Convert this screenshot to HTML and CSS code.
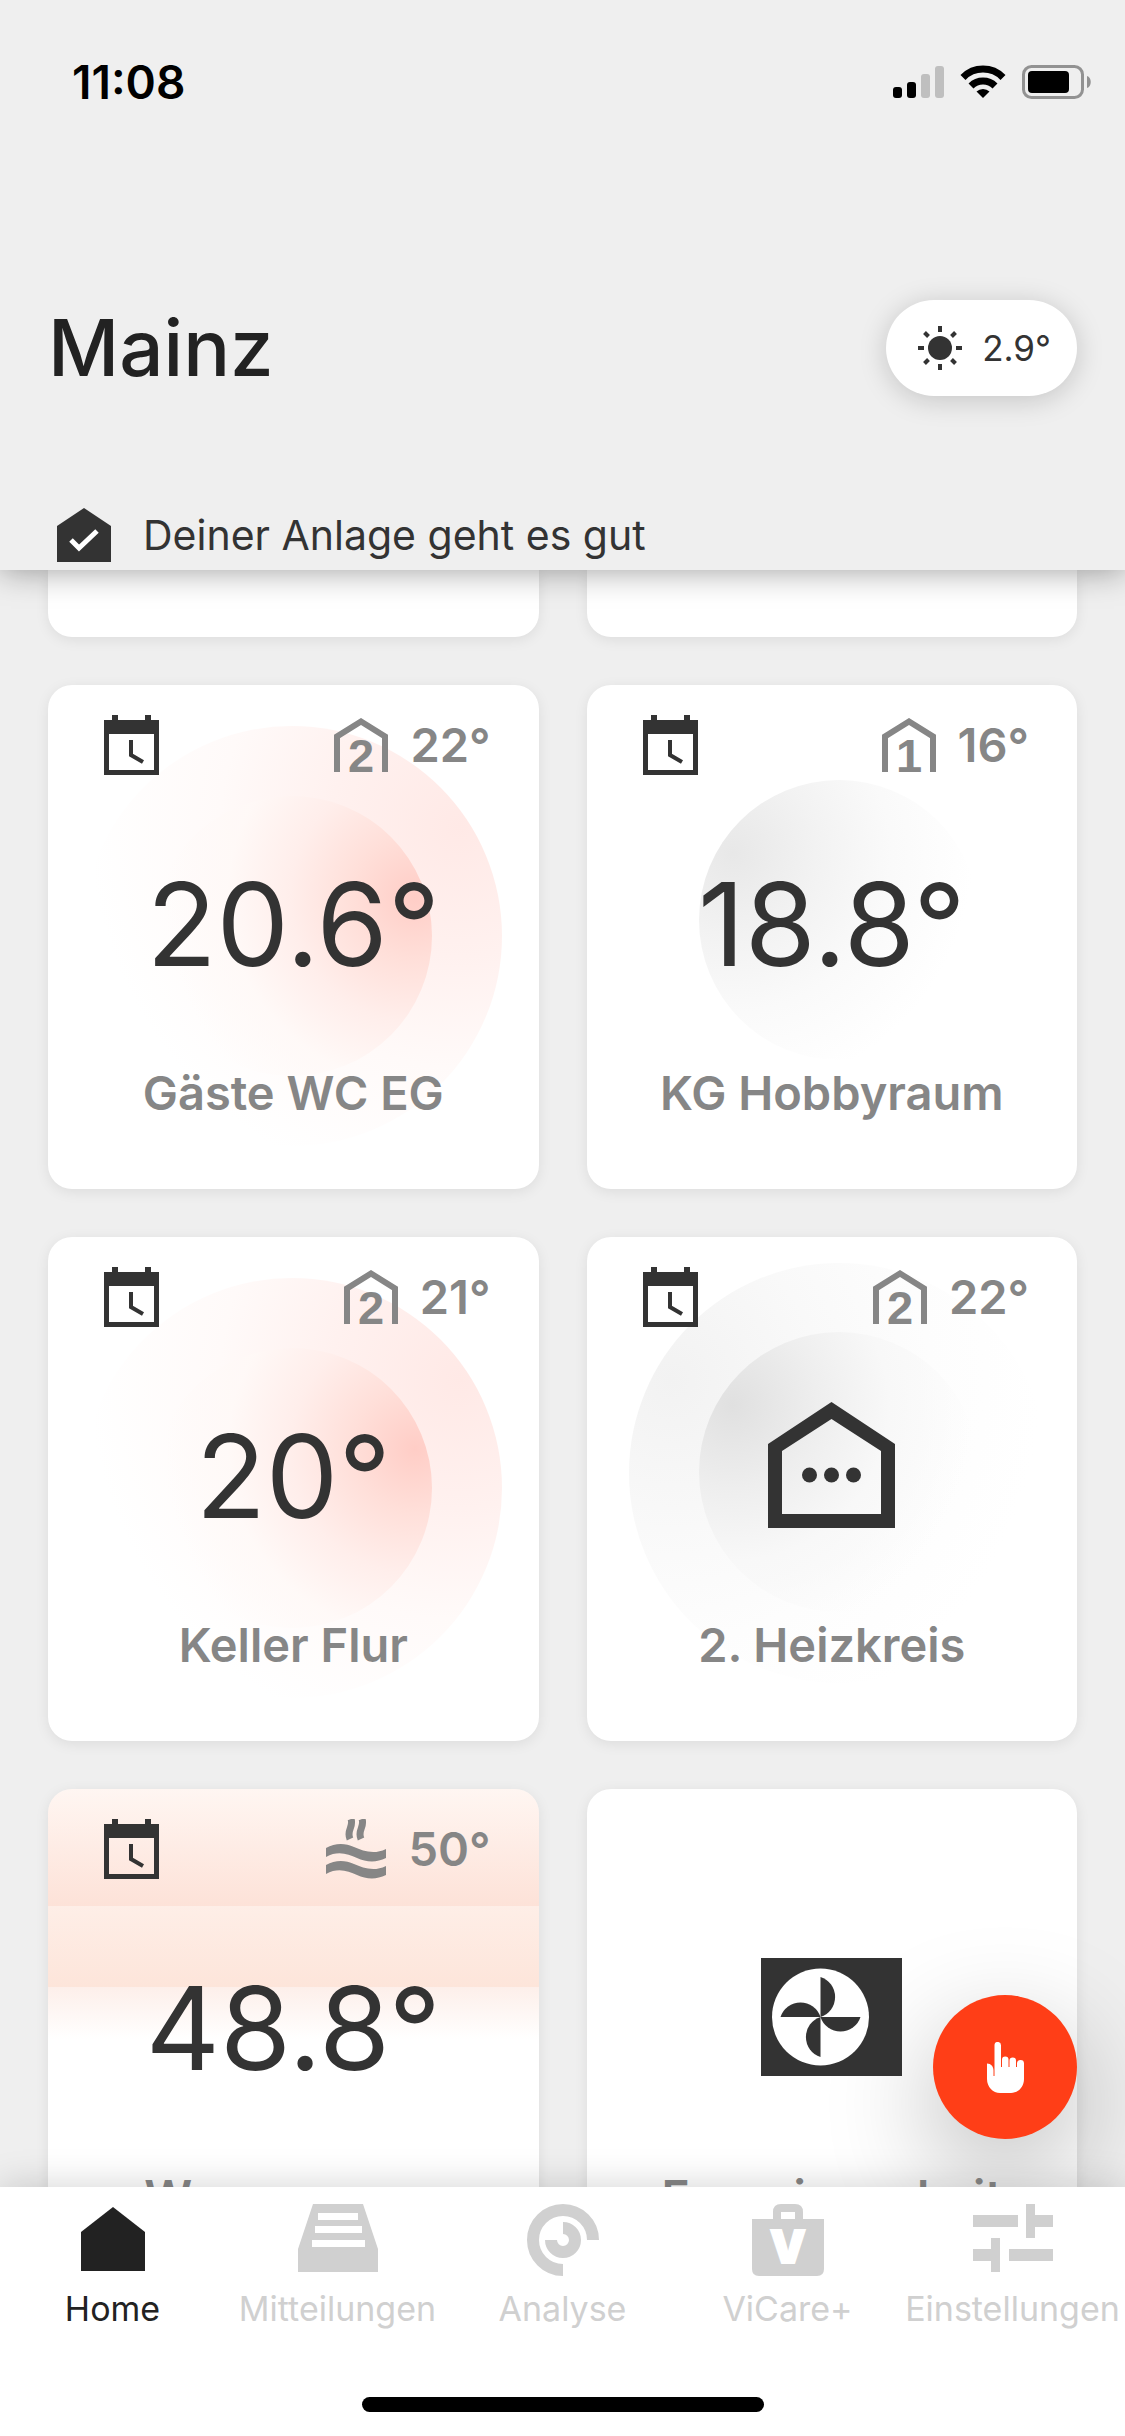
FILE: index.html
```html
<!DOCTYPE html>
<html lang="de">
<head>
<meta charset="utf-8">
<meta name="viewport" content="width=device-width, initial-scale=1">
<title>Mainz</title>
<link rel="stylesheet" href="styles.css">
</head>
<body>
<svg class="sprite" aria-hidden="true">
  <symbol id="calendar" viewBox="0 0 55 60">
    <path fill="currentColor" fill-rule="evenodd" d="M8 0h6v5h27V0h6v5h8v55H0V5h8zM5 19v36h45V19z"/>
    <path fill="none" stroke="currentColor" stroke-width="4" d="M27 25v15l12 7"/>
  </symbol>
  <symbol id="level" viewBox="0 0 54 54">
    <path fill="none" stroke="currentColor" stroke-width="6" d="M3 54V18.500L27 3.500l24 15V54"/>
  </symbol>
</svg>

<header class="header">
  <div class="statusbar">
    <span class="clock">11:08</span>
    <svg class="system" width="200" height="36" viewBox="0 0 200 36" aria-hidden="true">
      <rect x="0" y="23" width="9" height="11" rx="3"/>
      <rect x="14" y="18" width="9" height="16" rx="3"/>
      <rect x="28" y="10" width="9" height="24" rx="3" fill="#bfbfbf"/>
      <rect x="42" y="2" width="9" height="32" rx="3" fill="#bfbfbf"/>
      <g fill="none" stroke="#000">
        <path stroke-width="7" d="M70 13.500a28 28 0 0 1 40 0"/>
        <path stroke-width="7" d="M78 22a17 17 0 0 1 24 0"/>
      </g>
      <path d="M83.500 27.500a9.500 9.500 0 0 1 13 0L90 34z"/>
      <rect x="130.500" y="2.500" width="59" height="31" rx="8" fill="none" stroke="#929292" stroke-width="3"/>
      <rect x="135" y="7" width="41" height="22" rx="4"/>
      <path fill="#929292" d="M194 12c5 1 5 11 0 12z"/>
    </svg>
  </div>
  <div class="titlebar">
    <h1 class="title">Mainz</h1>
    <button class="weather" type="button">
      <svg width="44" height="44" viewBox="-22 -22 44 44" aria-hidden="true">
        <circle r="12" fill="currentColor"/>
        <path stroke="currentColor" stroke-width="4" d="M0-22v6M0 16v6M-22 0h6M16 0h6M11.500-11.500l4-4M-11.500-11.500l-4-4M11.500 11.500l4 4M-11.500 11.500l-4 4"/>
      </svg>
      <span>2.9°</span>
    </button>
  </div>
  <p class="state">
    <svg width="54" height="54" viewBox="0 0 54 54" aria-hidden="true">
      <path fill="currentColor" d="M0 18L27 0l27 18v36H0z"/>
      <path fill="none" stroke="#fff" stroke-width="5" d="M14 32l8 8 18-17"/>
    </svg>
    <span>Deiner Anlage geht es gut</span>
  </p>
</header>

<main class="content">
  <div class="grid">
    <div class="tile tile-tail"></div>
    <div class="tile tile-tail"></div>

    <a class="tile warm" href="#gaeste-wc">
      <span class="tile-head">
        <svg width="55" height="60"><use href="#calendar"/></svg>
        <span class="target">
          <svg class="level" width="54" height="54"><use href="#level"/><text class="digit" x="27" y="54">2</text></svg>
          <span>22°</span>
        </span>
      </span>
      <span class="value">20.6°</span>
      <span class="name">Gäste WC EG</span>
    </a>

    <a class="tile cool cool-low" href="#hobbyraum">
      <span class="tile-head">
        <svg width="55" height="60"><use href="#calendar"/></svg>
        <span class="target">
          <svg class="level" width="54" height="54"><use href="#level"/><text class="digit" x="27" y="54">1</text></svg>
          <span>16°</span>
        </span>
      </span>
      <span class="value">18.8°</span>
      <span class="name">KG Hobbyraum</span>
    </a>

    <a class="tile warm" href="#keller-flur">
      <span class="tile-head">
        <svg width="55" height="60"><use href="#calendar"/></svg>
        <span class="target">
          <svg class="level" width="54" height="54"><use href="#level"/><text class="digit" x="27" y="54">2</text></svg>
          <span>21°</span>
        </span>
      </span>
      <span class="value">20°</span>
      <span class="name">Keller Flur</span>
    </a>

    <a class="tile cool" href="#heizkreis-2">
      <span class="tile-head">
        <svg width="55" height="60"><use href="#calendar"/></svg>
        <span class="target">
          <svg class="level" width="54" height="54"><use href="#level"/><text class="digit" x="27" y="54">2</text></svg>
          <span>22°</span>
        </span>
      </span>
      <span class="value">
        <svg width="127" height="126" viewBox="0 0 127 126">
          <path fill="currentColor" fill-rule="evenodd" d="M0 42L63.500 0 127 42v84H0zM14 49v63h99V49L63.500 17z"/>
          <g fill="currentColor"><circle cx="41.500" cy="73" r="7.500"/><circle cx="63.500" cy="73" r="7.500"/><circle cx="85.500" cy="73" r="7.500"/></g>
        </svg>
      </span>
      <span class="name">2. Heizkreis</span>
    </a>

    <a class="tile water" href="#warmwasser">
      <span class="tile-head">
        <svg width="55" height="60"><use href="#calendar"/></svg>
        <span class="target">
          <svg width="60" height="60" viewBox="0 0 60 60">
            <g fill="currentColor">
              <path id="wave" d="M0 29C9 24 19 24 28 28S48 36 60 30v9C50 44 40 43 31 39S12 31 0 38z"/>
              <use href="#wave" y="17"/>
            </g>
            <g fill="none" stroke="currentColor" stroke-width="7">
              <path d="M25 0c3 8-5 11-1 20M36 0c3 8-5 11-1 20"/>
            </g>
          </svg>
          <span>50°</span>
        </span>
      </span>
      <span class="value">48.8°</span>
      <span class="name">Warmwasser</span>
    </a>

    <a class="tile" href="#energiecockpit">
      <span class="tile-head"></span>
      <span class="value">
        <svg width="141" height="126" viewBox="0 -4 141 126">
          <path fill="currentColor" d="M0 0h141v118H0z"/>
          <circle cx="59.500" cy="59" r="48.500" fill="#fff"/>
          <g fill="currentColor">
            <path id="blade" d="M59.500 59V19a21 21 0 0 1 0 40z"/>
            <use href="#blade" transform="rotate(90 59.500 59)"/>
            <use href="#blade" transform="rotate(180 59.500 59)"/>
            <use href="#blade" transform="rotate(270 59.500 59)"/>
          </g>
        </svg>
      </span>
      <span class="name">Energiecockpit</span>
    </a>
  </div>
  <button class="fab" type="button" aria-label="Schnellaktionen">
    <svg width="37" height="51" viewBox="0 0 37 51" aria-hidden="true">
      <path fill="#fff" d="M0 21.500c4 0 6.500 3 6.500 7V34h1V3.200a3.200 3.200 0 0 1 6.500 0V25h1v-7.300a3.200 3.200 0 0 1 6.500 0V25h1v-6.300a3.200 3.200 0 0 1 6.500 0V25h1v-3.500a3.200 3.200 0 0 1 7 0V37c0 8-6 14-13 14h-11C6 51 0 45 0 37z"/>
    </svg>
  </button>
</main>

<footer class="footer">
  <nav class="tabs">
    <a class="tab active" href="#home">
      <svg width="80" height="72" viewBox="0 0 80 72" aria-hidden="true"><path fill="currentColor" d="M8 28L40 3l32 25v39H8z"/></svg>
      <span>Home</span>
    </a>
    <a class="tab" href="#mitteilungen">
      <svg width="80" height="72" viewBox="0 0 80 72" aria-hidden="true"><path fill="currentColor" fill-rule="evenodd" d="M0 68V45L15 0h50l15 45v23zM20 9v7h40V9zM17 22v7h47v-7zM14 36v7h53v-7z"/></svg>
      <span>Mitteilungen</span>
    </a>
    <a class="tab" href="#analyse">
      <svg width="80" height="72" viewBox="-4 0 80 72" aria-hidden="true"><path fill="none" stroke="currentColor" stroke-width="12" d="M66 36A30 30 0 1 0 36 66M36 24A12 12 0 1 1 24 36"/></svg>
      <span>Analyse</span>
    </a>
    <a class="tab" href="#vicare-plus">
      <svg width="80" height="72" viewBox="-4 0 80 72" aria-hidden="true">
        <path fill="currentColor" fill-rule="evenodd" d="M0 15h21V8q0-8 8-8h14q8 0 8 8v7h21v50q0 7-7 7H7q-7 0-7-7zM29 8v7h14V8z"/>
        <text class="bag-letter" x="36" y="59">V</text>
      </svg>
      <span>ViCare+</span>
    </a>
    <a class="tab" href="#einstellungen">
      <svg width="80" height="72" viewBox="0 0 80 72" aria-hidden="true"><path fill="currentColor" d="M0 11h45v12H0zM53 0h9v11h18v12H62v11h-9zM0 45h18V34h9v34h-9V57H0zM36 45h44v12H36z"/></svg>
      <span>Einstellungen</span>
    </a>
  </nav>
  <div class="home-indicator"></div>
</footer>
</body>
</html>
```

FILE: styles.css
```css
* {
  box-sizing: border-box;
}

body {
  margin: 0;
  height: 100vh;
  display: flex;
  flex-direction: column;
  overflow: hidden;
  background: #efefef;
  color: #333;
  font-family: Inter, "Liberation Sans", sans-serif;
}

a {
  color: inherit;
  text-decoration: none;
}

button {
  border: 0;
  padding: 0;
  font: inherit;
  color: inherit;
}

svg {
  display: block;
  flex: none;
}

.sprite {
  position: absolute;
  width: 0;
  height: 0;
}

/* Header */

.header {
  position: relative;
  z-index: 1;
  flex: none;
  padding: 54px 48px 8px;
  background: #efefef;
  box-shadow: 0 0 32px rgba(0, 0, 0, 0.4);
}

.statusbar {
  display: flex;
  align-items: center;
  justify-content: space-between;
  height: 56px;
  padding-left: 24px;
  margin-right: -16px;
  color: #000;
}

.clock {
  font-size: 46px;
  line-height: 56px;
  font-weight: 600;
}

.titlebar {
  display: flex;
  align-items: center;
  justify-content: space-between;
  margin-top: 190px;
}

.title {
  margin: 0;
  font-size: 78px;
  line-height: 96px;
  font-weight: 500;
  color: #222;
}

.weather {
  display: flex;
  align-items: center;
  gap: 20px;
  height: 96px;
  padding: 0 26px 0 32px;
  border-radius: 48px;
  background: #fff;
  box-shadow: 0 4px 28px rgba(0, 0, 0, 0.18);
  font-size: 35px;
}

.state {
  display: flex;
  align-items: center;
  gap: 32px;
  margin: 112px 0 0;
  padding-left: 9px;
  font-size: 41px;
  line-height: 54px;
}

/* Tiles */

.content {
  position: relative;
  flex: 1;
  min-height: 0;
  overflow: hidden;
}

.grid {
  display: grid;
  grid-template-columns: 1fr 1fr;
  gap: 48px;
  padding: 0 48px;
}

.tile {
  position: relative;
  display: flex;
  flex-direction: column;
  align-items: stretch;
  min-height: 504px;
  overflow: hidden;
  border-radius: 24px;
  background: #fff;
  box-shadow: 0 3px 14px rgba(0, 0, 0, 0.08);
}

.tile-tail {
  min-height: 67px;
  border-radius: 0 0 24px 24px;
}

/* Concentric glow discs behind the reading */

.warm::before,
.warm::after,
.cool::before,
.cool::after {
  content: "";
  position: absolute;
  border-radius: 50%;
}

.warm::before {
  left: 34px;
  top: 41px;
  width: 420px;
  height: 420px;
  background: radial-gradient(circle 370px at 90% 24%, #ffe9e6, #fff1ef 35%, #fffaf9 65%, #fff);
}

.warm::after {
  left: 104px;
  top: 111px;
  width: 280px;
  height: 280px;
  background: radial-gradient(circle 250px at 94% 36%, #ffcdc6, #ffdfd9 25%, #ffeeeb 50%, rgba(255, 249, 247, 0.8) 75%, rgba(255, 255, 255, 0));
}

.cool::before {
  left: 42px;
  top: 26px;
  width: 420px;
  height: 420px;
  background: radial-gradient(circle 370px at 10% 28%, #f2f2f2, #f9f9f9 40%, #fdfdfd 70%, #fff);
}

.cool::after {
  left: 112px;
  top: 95px;
  width: 280px;
  height: 280px;
  background: radial-gradient(circle 240px at 12% 26%, #e0e0e0, #eeeeee 35%, #f8f8f8 65%, rgba(255, 255, 255, 0));
}

.cool-low::before {
  display: none;
}

.cool-low::after {
  opacity: 0.75;
}

.water {
  background: linear-gradient(#fff6f2, #fde2d8 117px, #feeee7 117px, #fde5da 198px, #fdefea 198px, #fff 250px);
}

.tile-head,
.value,
.name {
  position: relative;
  z-index: 1;
}

.tile-head {
  display: flex;
  align-items: center;
  justify-content: space-between;
  height: 60px;
  margin: 30px 48px 0 56px;
}

.target {
  display: flex;
  align-items: center;
  gap: 22px;
  color: #868686;
  font-size: 47px;
  line-height: 60px;
  font-weight: 600;
}

.level {
  overflow: visible;
}

.digit {
  fill: currentColor;
  font: bold 47px "Liberation Sans", sans-serif;
  text-anchor: middle;
}

.value {
  display: flex;
  justify-content: center;
  height: 150px;
  margin-top: 75px;
  font-size: 115px;
  line-height: 150px;
}

.name {
  margin-top: 65px;
  color: #868686;
  font-size: 47px;
  line-height: 56px;
  font-weight: 600;
  text-align: center;
}

.fab {
  position: absolute;
  right: 48px;
  bottom: 48px;
  display: flex;
  align-items: center;
  justify-content: center;
  width: 144px;
  height: 144px;
  border-radius: 50%;
  background: #ff3e17;
  box-shadow: 0 36px 110px rgba(0, 0, 0, 0.28);
}

/* Tab bar */

.footer {
  position: relative;
  z-index: 1;
  flex: none;
  padding: 17px 0 24px;
  background: #fff;
  box-shadow: 0 0 36px rgba(0, 0, 0, 0.18);
}

.tabs {
  display: grid;
  grid-template-columns: repeat(5, minmax(0, 1fr));
}

.tab {
  display: flex;
  flex-direction: column;
  align-items: center;
  gap: 12px;
  color: #d0d0d0;
  font-size: 34px;
  line-height: 42px;
}

.active {
  color: #222;
}

.bag-letter {
  fill: #fff;
  stroke: #fff;
  stroke-width: 2px;
  font-size: 45px;
  font-weight: 900;
  text-anchor: middle;
}

.home-indicator {
  width: 402px;
  height: 15px;
  margin: 67px auto 0;
  border-radius: 8px;
  background: #000;
}
```
